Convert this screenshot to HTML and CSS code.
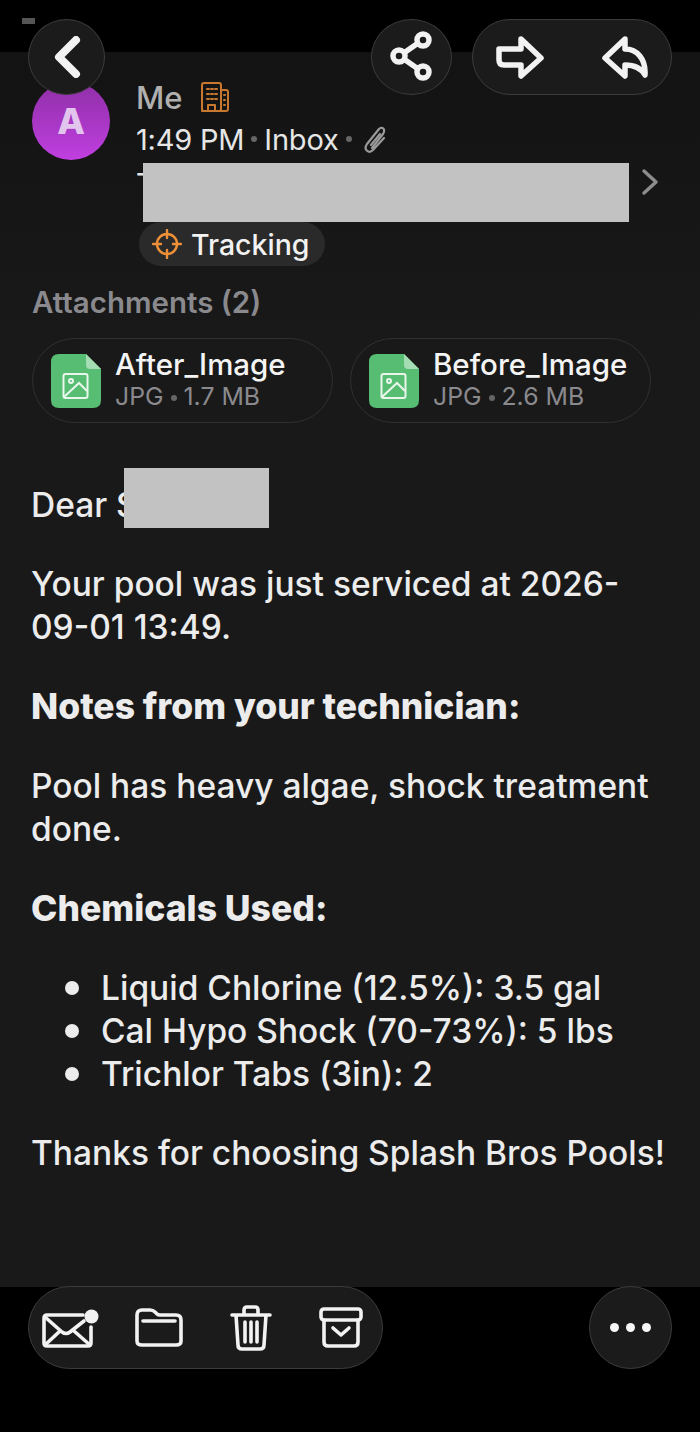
FILE: index.html

```html
<!DOCTYPE html>
<html lang="en">
<head>
    <meta charset="UTF-8">
    <meta name="viewport" content="width=device-width, initial-scale=1.0">
    <title>Email</title>
    <link rel="stylesheet" href="styles.css">
</head>
<body>
    <div class="status-bar"><span class="status-dash"></span></div>

    <!-- Floating buttons on top -->
    <button class="float-btn back-btn">
        <svg width="30" height="42" viewBox="0 0 30 42"><path d="M24 4 L7 21 L24 38" class="ic-heavy"/></svg>
    </button>
    <button class="float-btn share-btn">
        <svg width="44" height="52" viewBox="0 0 44 52" class="ic"><circle cx="33" cy="9" r="6"/><circle cx="9" cy="25" r="6"/><circle cx="33" cy="41" r="6"/><path d="M27.5 12.5 L14.5 21.5 M14.5 28.5 L27.5 37.5"/></svg>
    </button>
    <div class="float-btn reply-group">
        <svg width="50" height="44" viewBox="0 0 50 44" class="ic"><path d="M4 14 H26 V4 L46 23 L26 41 V30 H9 Q4 30 4 25 Z"/></svg>
        <svg width="48" height="44" viewBox="0 0 48 44" class="ic"><path d="M24 4 L4 23 L24 41 V30 C32 30 40 33 44 40 C45 24 36 14 24 14 Z"/></svg>
    </div>

    <main class="message">
        <header class="head">
            <div class="avatar">A</div>
            <div class="head-info">
                <div class="sender">
                    <span>Me</span>
                    <svg width="30" height="32" viewBox="0 0 30 32" class="ic-building"><rect x="2" y="2" width="19" height="28" rx="2"/><path d="M21 9 H26 Q28 9 28 11 V28 Q28 30 26 30 H2 M7 8 H9 M11 8 H13 M15 8 H17 M7 13 H9 M11 13 H13 M15 13 H17 M7 18 H9 M11 18 H13 M15 18 H17 M8 30 V24 H15 V30 M24 14 H25 M24 19 H25 M24 24 H25"/></svg>
                </div>
                <div class="meta">
                    <span>1:49 PM</span><i class="dot"></i><span>Inbox</span><i class="dot"></i>
                    <svg width="28" height="30" viewBox="0 0 28 30" class="ic-clip"><path d="M10 24 L21 10 C24 5 20 2 17 5 L5 20 C1 26 7 30 11 26 L22 14 M9 21 L18 10"/></svg>
                </div>
                <div class="to-row">
                    <span>To</span>
                    <svg width="20" height="28" viewBox="0 0 20 28" class="chevron"><path d="M4 3 L16 14 L4 25"/></svg>
                    <div class="redact redact-to"></div>
                </div>
                <div class="tag">
                    <svg width="30" height="30" viewBox="0 0 30 30" class="ic-target"><circle cx="15" cy="15" r="10"/><path d="M15 1 V9 M15 21 V29 M1 15 H9 M21 15 H29"/></svg>
                    <span>Tracking</span>
                </div>
            </div>
        </header>

        <h2 class="att-title">Attachments (2)</h2>
        <div class="att-list">
            <div class="att">
                <svg width="50" height="54" viewBox="0 0 50 54" class="file-ic"><path d="M8 0 H35 L50 15 V46 Q50 54 42 54 H8 Q0 54 0 46 V8 Q0 0 8 0 Z" fill="#57bd72"/><path d="M35 0 L50 15 H39 Q35 15 35 11 Z" fill="#a5dcb3"/><g class="file-pic"><rect x="12.5" y="20" width="24" height="24" rx="2"/><circle cx="20" cy="27" r="2"/><path d="M13 43 L28 29 L36 37"/></g></svg>
                <div class="att-text">
                    <div class="att-name">After_Image</div>
                    <div class="att-size">JPG<i class="dot"></i>1.7 MB</div>
                </div>
            </div>
            <div class="att">
                <svg width="50" height="54" viewBox="0 0 50 54" class="file-ic"><path d="M8 0 H35 L50 15 V46 Q50 54 42 54 H8 Q0 54 0 46 V8 Q0 0 8 0 Z" fill="#57bd72"/><path d="M35 0 L50 15 H39 Q35 15 35 11 Z" fill="#a5dcb3"/><g class="file-pic"><rect x="12.5" y="20" width="24" height="24" rx="2"/><circle cx="20" cy="27" r="2"/><path d="M13 43 L28 29 L36 37"/></g></svg>
                <div class="att-text">
                    <div class="att-name">Before_Image</div>
                    <div class="att-size">JPG<i class="dot"></i>2.6 MB</div>
                </div>
            </div>
        </div>

        <div class="body-text">
            <p class="dear">Dear S<span class="redact redact-name"></span></p>
            <p>Your pool was just serviced at 2026-<br>09-01 13:49.</p>
            <p><b>Notes from your technician:</b></p>
            <p>Pool has heavy algae, shock treatment<br>done.</p>
            <p><b>Chemicals Used:</b></p>
            <ul>
                <li>Liquid Chlorine (12.5%): 3.5 gal</li>
                <li>Cal Hypo Shock (70-73%): 5 lbs</li>
                <li>Trichlor Tabs (3in): 2</li>
            </ul>
            <p>Thanks for choosing Splash Bros Pools!</p>
        </div>
    </main>

    <footer class="bottom-bar">
        <div class="float-btn tools">
            <svg width="58" height="42" viewBox="0 0 58 42" class="ic-thin"><path d="M42 8 H6 Q3 8 3 11 V36 Q3 39 6 39 H47 Q50 39 50 36 V20"/><path d="M4 10 L21 25 Q25 28 29 25 L43 14 M4 38 L19 24 M49 38 L33 24"/><circle cx="50.5" cy="9.5" r="7" class="ic-fill"/></svg>
            <svg width="50" height="40" viewBox="0 0 50 40" class="ic-thin tool-folder"><path d="M2 7 Q2 2 7 2 H15 Q18 2 20 4 L22 6 Q23 7 25 7 H41 Q46 7 46 12 V33 Q46 37 41 37 H7 Q2 37 2 33 Z"/><path d="M8 13 H40"/></svg>
            <svg width="42" height="48" viewBox="0 0 42 48" class="ic-thin tool-trash"><path d="M2 11 H40 M14 10 V6 Q14 3 17 3 H25 Q28 3 28 6 V10 M6 11 L8 41 Q8 45 12 45 H30 Q34 45 34 41 L36 11 M15 18 V38 M21 18 V38 M27 18 V38"/></svg>
            <svg width="44" height="42" viewBox="0 0 44 42" class="ic-thin tool-archive"><rect x="2" y="2" width="40" height="11" rx="3"/><path d="M5 13 V35 Q5 39 9 39 H35 Q39 39 39 35 V13 M14 21 L22 28 L30 21"/></svg>
        </div>
        <button class="float-btn more-btn"><i></i><i></i><i></i></button>
    </footer>
</body>
</html>
```

FILE: styles.css

```css
* {
    box-sizing: border-box;
}

html, body {
    margin: 0;
    background: #000;
}

body {
    width: 700px;
    height: 1432px;
    position: relative;
    overflow: hidden;
    font-family: Inter, "Liberation Sans", sans-serif;
    color: #f0f0f0;
}

.status-bar {
    height: 52px;
    background: #000;
    padding: 18px 22px;
}

.status-dash {
    display: block;
    width: 13px;
    height: 6px;
    background: #555;
}

/* floating glass buttons */
.float-btn {
    background: #1b1b1b;
    border: 1.5px solid #3c3c3c;
    color: #f2f2f2;
    padding: 0;
    display: flex;
    align-items: center;
    justify-content: center;
}

.back-btn, .share-btn, .reply-group {
    position: absolute;
    z-index: 2;
}

.back-btn {
    left: 28px;
    top: 19px;
    width: 77px;
    height: 76px;
    border-radius: 50%;
}

.share-btn {
    left: 371px;
    top: 19px;
    width: 81px;
    height: 76px;
    border-radius: 50%;
}

.reply-group {
    left: 472px;
    top: 19px;
    width: 200px;
    height: 76px;
    border-radius: 38px;
    justify-content: space-between;
    padding: 0 22px;
}

.ic, .ic-heavy, .ic-thin, .ic-building, .ic-clip, .chevron, .ic-target {
    fill: none;
    stroke-linecap: round;
    stroke-linejoin: round;
}

.ic {
    stroke: #f2f2f2;
    stroke-width: 5.5;
}

.ic-heavy {
    stroke: #f2f2f2;
    stroke-width: 8;
}

.ic-thin {
    stroke: #f2f2f2;
    stroke-width: 3.6;
}

.ic-fill {
    fill: #f2f2f2;
    stroke-width: 0;
}

.ic-building {
    stroke: #c9782f;
    stroke-width: 2;
}

.ic-clip {
    stroke: #9a9a9a;
    stroke-width: 2.2;
}

.chevron {
    stroke: #8c8c8c;
    stroke-width: 3.5;
}

.ic-target {
    stroke: #ee9037;
    stroke-width: 2.4;
}

/* message */
.message {
    height: 1235px;
    background: linear-gradient(#131313, #191919 300px);
    padding: 30px 0 0 32px;
}

.head {
    display: flex;
    gap: 26px;
}

.avatar {
    width: 78px;
    height: 78px;
    border-radius: 50%;
    background: linear-gradient(#8f2fa8, #c03fe0);
    color: #e2c5ec;
    font-size: 36px;
    font-weight: 800;
    display: flex;
    align-items: center;
    justify-content: center;
    flex: none;
}

.head-info {
    flex: 1;
    margin-top: -3px;
}

.sender {
    display: flex;
    align-items: center;
    gap: 17px;
    height: 36px;
    font-size: 31px;
    font-weight: 500;
    color: #b0b0b0;
}

.meta {
    display: flex;
    align-items: center;
    height: 48px;
    font-size: 29px;
    letter-spacing: -0.2px;
    color: #e6e6e6;
}

.meta .ic-clip {
    margin-left: 3px;
}

.dot {
    display: inline-block;
    width: 6px;
    height: 6px;
    border-radius: 50%;
    background: #666;
    margin: 0 7px;
    vertical-align: middle;
}

.to-row {
    position: relative;
    height: 59px;
    font-size: 29px;
    width: 524px;
    line-height: 41px;
    color: #e6e6e6;
}

.to-row .chevron {
    position: absolute;
    right: 0;
    top: 5px;
}

.redact {
    background: #c2c2c2;
}

.redact-to {
    position: absolute;
    left: 7px;
    top: 0;
    width: 486px;
    height: 59px;
}

.tag {
    display: inline-flex;
    align-items: center;
    gap: 9px;
    height: 44px;
    margin: 0 0 0 3px;
    padding: 0 16px 0 13px;
    border-radius: 22px;
    background: #2a2a2b;
    font-size: 28.5px;
    font-weight: 500;
    color: #f2f2f2;
}

.att-title {
    margin: 16px 0 0;
    font-size: 29.5px;
    line-height: 40px;
    font-weight: 600;
    color: #8a8a8e;
}

.att-list {
    display: flex;
    gap: 17px;
    margin-top: 16px;
}

.att {
    width: 301px;
    height: 85px;
    border: 1.5px solid #303030;
    border-radius: 43px;
    display: flex;
    align-items: center;
    gap: 14px;
    padding: 0 18px;
}

.file-pic {
    fill: none;
    stroke: #e8f6ec;
    stroke-width: 2;
}

.att-text {
    padding-bottom: 2px;
}

.att-name {
    font-size: 29.5px;
    line-height: 33px;
    font-weight: 500;
    color: #f4f4f4;
}

.att-size {
    font-size: 24.8px;
    line-height: 30px;
    color: #8a8a8e;
}

.body-text {
    margin: 60.6px 0 0 -1px;
    font-size: 33.5px;
    font-weight: 500;
    line-height: 43px;
    color: #ececec;
}

.body-text b {
    font-size: 35.5px;
    font-weight: 800;
}

.body-text p {
    margin: 0 0 36px;
}

.dear {
    position: relative;
}

.redact-name {
    position: absolute;
    left: 93px;
    top: -16px;
    width: 145px;
    height: 60px;
}

.body-text ul {
    margin: 0 0 36px;
    padding: 0 0 0 34px;
    list-style: none;
}

.body-text li {
    display: flex;
    align-items: center;
    gap: 22px;
}

.body-text li::before {
    content: "";
    width: 14px;
    height: 14px;
    border-radius: 50%;
    background: #ececec;
}

/* bottom toolbar */
.bottom-bar {
    height: 145px;
    display: flex;
    justify-content: space-between;
    padding: 0 28px;
}

.tools {
    width: 355px;
    height: 83px;
    margin-top: -1px;
    border-radius: 42px;
    justify-content: flex-start;
    padding: 0 0 0 12px;
}

.tool-folder {
    margin-left: 36px;
}

.tool-trash {
    margin-left: 44.5px;
}

.tool-archive {
    margin-left: 47px;
}

.more-btn {
    width: 83px;
    height: 83px;
    margin-top: -1px;
    border-radius: 50%;
    gap: 7px;
}

.more-btn i {
    width: 9px;
    height: 9px;
    border-radius: 50%;
    background: #f6f6f6;
}
```
